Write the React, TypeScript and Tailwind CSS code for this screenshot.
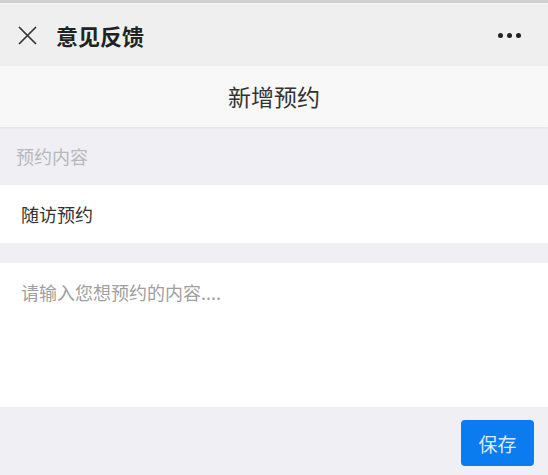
import React from "react";

export default function App() {
  return (
    <div
      className="w-[548px] h-[475px] overflow-hidden flex flex-col bg-[#efeff4]"
      style={{ fontFamily: '"Noto Sans CJK SC", "Noto Sans", sans-serif' }}
    >
      <div className="h-[3px] bg-[#cfcfcf]" />
      <div className="h-[63px] bg-[#efefef] border-t border-[#f7f7f7] flex items-center px-[17px]">
        <svg width="21" height="21" viewBox="0 0 21 21" className="shrink-0">
          <path d="M2 2 L19 19 M19 2 L2 19" stroke="#333" strokeWidth="1.7" fill="none" />
        </svg>
        <div className="ml-[18px] text-[22px] font-bold text-[#222] leading-none">意见反馈</div>
        <div className="ml-auto flex gap-[4px] mr-[10px]">
          <span className="w-[5px] h-[5px] rounded-full bg-[#222]" />
          <span className="w-[5px] h-[5px] rounded-full bg-[#222]" />
          <span className="w-[5px] h-[5px] rounded-full bg-[#222]" />
        </div>
      </div>
      <div className="h-[61px] bg-[#f8f8f8] flex items-center justify-center shadow-[0_1px_2px_rgba(0,0,0,0.06)]">
        <span className="text-[23px] text-[#333] leading-none">新增预约</span>
      </div>
      <div className="h-[58px] flex items-center px-[16px]">
        <span className="text-[18px] text-[#b8b8bc] leading-none">预约内容</span>
      </div>
      <div className="h-[58px] bg-white flex items-center px-[21px]">
        <span className="text-[18px] text-[#333] leading-none">随访预约</span>
      </div>
      <div className="h-[20px]" />
      <div className="h-[144px] bg-white px-[21px] pt-[18px]">
        <span className="text-[18px] text-[#a0a0a0] leading-none">请输入您想预约的内容....</span>
      </div>
      <div className="flex-1 flex justify-end items-start pt-[13px] pr-[14px]">
        <div className="w-[73px] h-[46px] rounded-[4px] bg-[#0a7cf0] flex items-center justify-center">
          <span className="text-[19px] text-[#d9eaff] leading-none">保存</span>
        </div>
      </div>
    </div>
  );
}
